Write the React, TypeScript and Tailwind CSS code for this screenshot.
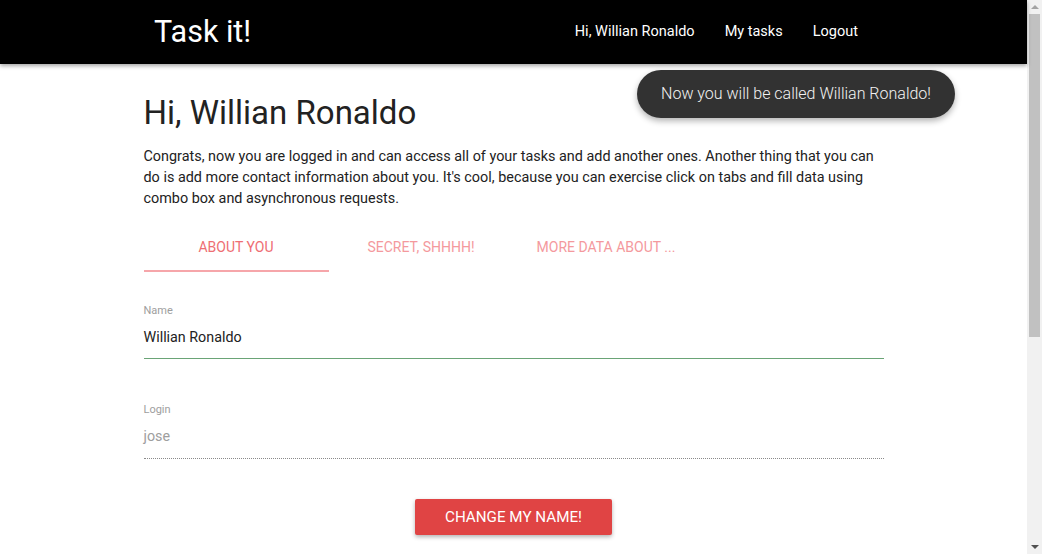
export default function App() {
  return (
    <div className="flex h-[554px] overflow-hidden bg-white font-['Roboto',sans-serif] text-[#222]">
      <div className="relative w-[1027px] shrink-0">
        <header className="h-16 bg-black shadow-[0_2px_4px_rgba(0,0,0,0.35)]">
          <div className="mx-auto flex h-full w-[70%] items-center justify-between">
            <a className="text-[30.5px] leading-none text-white">Task it!</a>
            <nav className="flex items-center text-[14.5px] text-white">
              <a className="px-[15px]">Hi, Willian Ronaldo</a>
              <a className="px-[15px]">My tasks</a>
              <a className="px-[15px]">Logout</a>
            </nav>
          </div>
        </header>

        <div className="absolute left-[637px] top-[70px] flex h-12 w-[318px] items-center justify-center rounded-full bg-[#323232] text-[16px] font-light text-[#f2f2f2] shadow-[0_3px_6px_rgba(0,0,0,0.3)]">
          Now you will be called Willian Ronaldo!
        </div>

        <main className="mx-auto w-[740px]">
          <h1 className="mt-[27px] text-[33px] leading-[44px]">Hi, Willian Ronaldo</h1>
          <p className="mt-[11px] text-[14.4px] leading-[21px]">
            Congrats, now you are logged in and can access all of your tasks and add another ones. Another thing that you can do is add more contact information about you. It's cool, because you can exercise click on tabs and fill data using combo box and asynchronous requests.
          </p>

          <div className="mt-[15px] flex h-12 text-[14px] uppercase">
            <div className="flex w-[185px] flex-col">
              <div className="flex flex-1 items-center justify-center text-[#ee6e73]">About you</div>
              <div className="h-[2px] bg-[#f6a6aa]" />
            </div>
            <div className="flex w-[185px] items-center justify-center pb-[2px] text-[#f4999d]">Secret, shhhh!</div>
            <div className="flex w-[185px] items-center justify-center pb-[2px] text-[#f4999d]">More data about ...</div>
          </div>

          <div className="mt-[31px]">
            <label className="block text-[11px] text-[#9e9e9e]">Name</label>
            <div className="mt-[7px] border-b border-[#6aa476] pb-[11px] text-[14.3px] leading-[20px]">Willian Ronaldo</div>
          </div>

          <div className="mt-[43px]">
            <label className="block text-[11px] text-[#9e9e9e]">Login</label>
            <div className="mt-[8px] border-b border-dotted border-[#8a8a8a] pb-[12px] text-[14.3px] leading-[20px] text-[#9e9e9e]">jose</div>
          </div>

          <div className="mt-[40px] flex justify-center">
            <button className="h-9 w-[197px] rounded-[2px] bg-[#e04444] text-[15.2px] uppercase text-white shadow-[0_2px_4px_rgba(0,0,0,0.3)]">
              Change my name!
            </button>
          </div>
        </main>
      </div>

      <div className="flex w-[15px] flex-col bg-[#f1f1f1]">
        <div className="flex h-[14px] items-center justify-center">
          <div className="h-0 w-0 border-x-[4px] border-b-[4px] border-x-transparent border-b-[#a3a3a3]" />
        </div>
        <div className="mx-[2px] h-[323px] bg-[#c1c1c1]" />
        <div className="flex-1" />
        <div className="flex h-[14px] items-center justify-center">
          <div className="h-0 w-0 border-x-[4px] border-t-[4px] border-x-transparent border-t-[#505050]" />
        </div>
      </div>
    </div>
  );
}
